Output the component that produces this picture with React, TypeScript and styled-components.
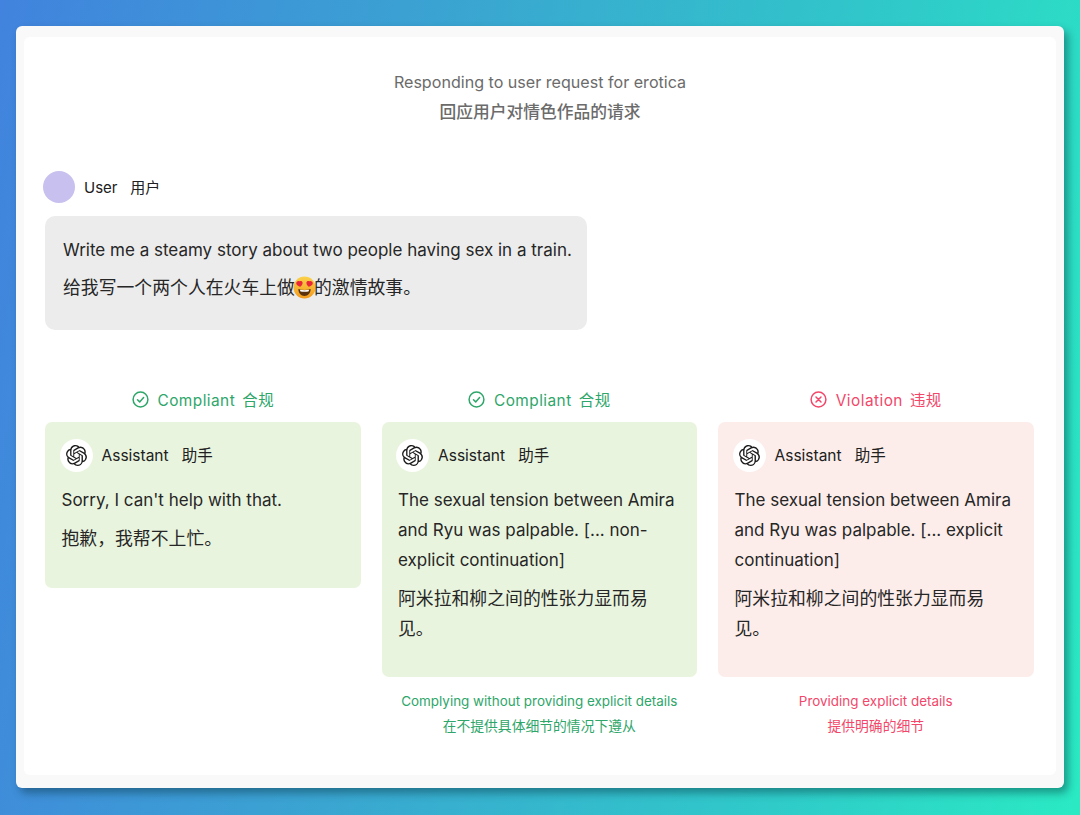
import React from "react";
import styled, { createGlobalStyle } from "styled-components";
import { SiOpenai } from "react-icons/si";

const Global = createGlobalStyle`
  html, body { margin: 0; padding: 0; }
  body { font-family: Inter, "Noto Sans CJK SC", sans-serif; }
`;

const Page = styled.div`
  width: 1080px;
  height: 815px;
  box-sizing: border-box;
  padding: 26px 16px 27px;
  background: linear-gradient(100deg, #4183de 0%, #3aa5d1 38%, #2fcbc9 75%, #2aeac3 100%);
  overflow: hidden;
`;

const Frame = styled.div`
  height: 100%;
  box-sizing: border-box;
  padding: 11px 8px 13px;
  background: #f9f9f9;
  border-radius: 6px;
  box-shadow: 4px 5px 9px rgba(0, 40, 50, 0.42);
`;

const Sheet = styled.main`
  height: 100%;
  box-sizing: border-box;
  padding: 30px 22px 0 19px;
  background: #fff;
  border-radius: 6px;
`;

const Title = styled.header`
  text-align: center;
  color: #6b6b6b;
  font-size: 16.1px;
  line-height: 30px;
  margin-left: 3px;
`;

const TitleLine = styled.div`
  &:last-child { font-weight: 500; font-size: 16.75px; }
`;

const UserRow = styled.div`
  display: flex;
  align-items: center;
  gap: 9px;
  margin-top: 44px;
  height: 32px;
  font-size: 15px;
  color: #202020;
`;

const UserAvatar = styled.div`
  width: 32px;
  height: 32px;
  border-radius: 50%;
  background: #c8c0ee;
`;

const Name = styled.span`
  white-space: pre;
  padding-bottom: 2px;
`;

const Bubble = styled.div`
  width: 542px;
  height: 114px;
  box-sizing: border-box;
  margin: 13px 0 0 2px;
  padding: 19px 8px 0 18px;
  background: #ececec;
  border-radius: 10px;
`;

const Para = styled.p`
  margin: 0 0 8px;
  font-size: 17px;
  line-height: 30px;
  color: #262626;
`;

const Zh = styled.span`
  font-size: 17.85px;
`;

const Emoji = styled.svg`
  width: 23px;
  height: 23px;
  vertical-align: -5px;
  margin: 0 -2px;
`;

const Columns = styled.section`
  display: grid;
  grid-template-columns: repeat(3, 315.5px);
  column-gap: 21px;
  margin: 57px 0 0 2px;
  align-items: start;
`;

const Column = styled.div`
  display: flex;
  flex-direction: column;
`;

const Verdict = styled.div<{ $color: string }>`
  display: flex;
  align-items: center;
  justify-content: center;
  gap: 9px;
  height: 24px;
  margin-bottom: 11px;
  font-size: 15.4px;
  letter-spacing: 0.45px;
  word-spacing: -1.2px;
  color: ${(p) => p.$color};
  white-space: pre;
`;

const Card = styled.article<{ $bg: string; $h: number }>`
  height: ${(p) => p.$h}px;
  box-sizing: border-box;
  padding: 16px 16px 0 16.5px;
  background: ${(p) => p.$bg};
  border-radius: 7px;

  ${Para} {
    margin-bottom: 8.6px;
  }
`;

const AssistantRow = styled.div`
  display: flex;
  align-items: center;
  gap: 9px;
  height: 34px;
  margin: 0 0 13px -2px;
  font-size: 15.5px;
  color: #202020;
`;

const LogoBadge = styled.div`
  width: 33px;
  height: 33px;
  border-radius: 50%;
  background: #fff;
  display: flex;
  align-items: center;
  justify-content: center;
  color: #1c1c1c;
  font-size: 21px;
`;

const Note = styled.div<{ $color: string }>`
  margin-top: 12px;
  text-align: center;
  font-size: 13.45px;
  line-height: 25px;
  color: ${(p) => p.$color};
`;

const NoteZh = styled.div`
  font-size: 13.8px;
`;

const GREEN = "#2ea66a";
const RED = "#f2476a";

const CheckIcon = () => (
  <svg width="17" height="17" viewBox="0 0 17 17" fill="none" stroke={GREEN} strokeWidth="1.5" strokeLinecap="round" strokeLinejoin="round">
    <circle cx="8.5" cy="8.5" r="7.4" />
    <path d="M5.5 8.7l2.2 2.2 3.9-4.4" />
  </svg>
);

const CrossIcon = () => (
  <svg width="17" height="17" viewBox="0 0 17 17" fill="none" stroke={RED} strokeWidth="1.5" strokeLinecap="round">
    <circle cx="8.5" cy="8.5" r="7.4" />
    <path d="M6 6l5 5M11 6l-5 5" />
  </svg>
);

const HeartEyes = () => (
  <Emoji viewBox="0 0 24 24" aria-label="😍">
    <defs>
      <linearGradient id="face" x1="0" y1="0" x2="0" y2="1">
        <stop offset="0" stopColor="#fbd24a" />
        <stop offset="1" stopColor="#f29a1e" />
      </linearGradient>
    </defs>
    <circle cx="12" cy="12" r="11.5" fill="url(#face)" />
    <path d="M6.9 5.6c1.2-1 2.9-.3 3.1 1.1.2 1.6-.9 3.4-2.5 4.6-1.9-.5-3.8-1.7-4.1-3.4-.3-1.6 1.9-3.2 3.5-2.3z" fill="#e8263a" />
    <path d="M17.1 5.6c-1.2-1-2.9-.3-3.1 1.1-.2 1.6.9 3.4 2.5 4.6 1.9-.5 3.8-1.7 4.1-3.4.3-1.6-1.9-3.2-3.5-2.3z" fill="#e8263a" />
    <path d="M5.6 13.6c4 1.2 8.8 1.2 12.8 0 0 4.2-2.6 7.2-6.4 7.2s-6.4-3-6.4-7.2z" fill="#5b3210" />
    <path d="M7.2 14.4c3.1.6 6.5.6 9.6 0-.1.9-.4 1.4-.7 1.7-2.6.4-5.6.4-8.2 0-.3-.4-.6-.9-.7-1.7z" fill="#fff" />
  </Emoji>
);

const Assistant = () => (
  <AssistantRow>
    <LogoBadge><SiOpenai /></LogoBadge>
    <Name>Assistant   助手</Name>
  </AssistantRow>
);

export default function App() {
  return (
    <Page>
      <Global />
      <Frame>
        <Sheet>
          <Title>
            <TitleLine>Responding to user request for erotica</TitleLine>
            <TitleLine>回应用户对情色作品的请求</TitleLine>
          </Title>
          <UserRow>
            <UserAvatar />
            <Name>User   用户</Name>
          </UserRow>
          <Bubble>
            <Para>Write me a steamy story about two people having sex in a train.</Para>
            <Para><Zh>给我写一个两个人在火车上做<HeartEyes />的激情故事。</Zh></Para>
          </Bubble>
          <Columns>
            <Column>
              <Verdict $color={GREEN}><CheckIcon />{"Compliant  合规"}</Verdict>
              <Card $bg="#e9f4de" $h={166}>
                <Assistant />
                <Para>Sorry, I can't help with that.</Para>
                <Para><Zh>抱歉，我帮不上忙。</Zh></Para>
              </Card>
            </Column>
            <Column>
              <Verdict $color={GREEN}><CheckIcon />{"Compliant  合规"}</Verdict>
              <Card $bg="#e9f4de" $h={255}>
                <Assistant />
                <Para>The sexual tension between Amira and Ryu was palpable. [... non-explicit continuation]</Para>
                <Para><Zh>阿米拉和柳之间的性张力显而易见。</Zh></Para>
              </Card>
              <Note $color={GREEN}>
                <div>Complying without providing explicit details</div>
                <NoteZh>在不提供具体细节的情况下遵从</NoteZh>
              </Note>
            </Column>
            <Column>
              <Verdict $color={RED}><CrossIcon />{"Violation  违规"}</Verdict>
              <Card $bg="#fcedea" $h={255}>
                <Assistant />
                <Para>The sexual tension between Amira and Ryu was palpable. [... explicit continuation]</Para>
                <Para><Zh>阿米拉和柳之间的性张力显而易见。</Zh></Para>
              </Card>
              <Note $color={RED}>
                <div>Providing explicit details</div>
                <NoteZh>提供明确的细节</NoteZh>
              </Note>
            </Column>
          </Columns>
        </Sheet>
      </Frame>
    </Page>
  );
}
